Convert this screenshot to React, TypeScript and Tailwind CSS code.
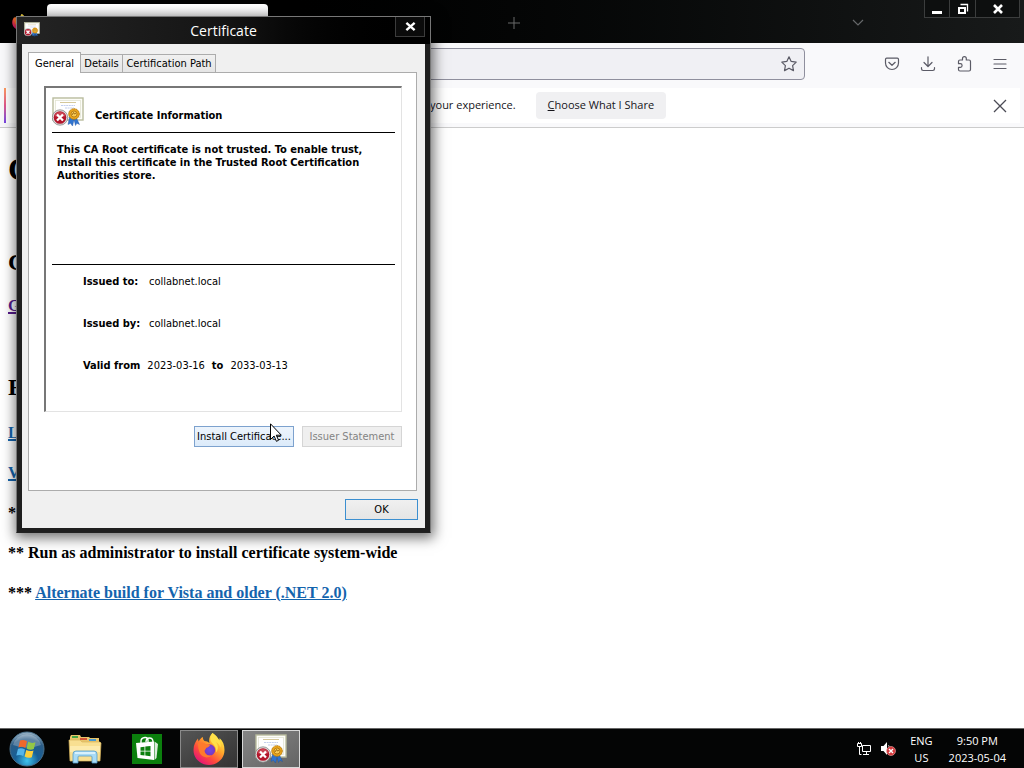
import type { ReactNode } from 'react';

function CertificateIcon({ className }: { className: string }) {
  return (
    <svg viewBox="0 0 32 30" className={className} aria-hidden="true">
      <rect x="1" y="1" width="30" height="22" fill="#fdfdf8" stroke="#b9bc9e" strokeWidth="1.4" />
      <rect x="3.5" y="3.5" width="25" height="17" fill="#fff" stroke="#e3e4d3" strokeWidth="0.8" />
      <path d="M8 5.5h16" stroke="#d5c89a" strokeWidth="1" />
      <path d="M9 8.5h14M13 11h9" stroke="#b4c3ea" strokeWidth="0.8" strokeDasharray="2 .6" />
      <path d="M17.5 20l-1.500 7.500 2.500-1.200L20.500 29l2-8zM24 20l3.500 7.500-2.600-1.200L23.500 28.500l-2-8z" fill="#2f74d0" stroke="#1c4f9f" strokeWidth="0.4" />
      <circle cx="22" cy="17" r="5.300" fill="#e9a51c" stroke="#b87908" strokeWidth="1" strokeDasharray="1.700 .5" />
      <circle cx="22" cy="17" r="3" fill="#f7ca55" stroke="#a96c07" strokeWidth="0.7" />
      <path d="M20 18l1.500-2.500 1 1.500 1.500-1" stroke="#8c5604" strokeWidth="0.8" fill="none" />
      <circle cx="8" cy="20.500" r="7.700" fill="#dedede" stroke="#7d7d7d" strokeWidth="0.7" />
      <circle cx="8" cy="20.500" r="6.300" fill="#b3162b" />
      <path d="M2.500 19a5.800 5.800 0 0 1 11 0q-5.500 2.500-11 0" fill="#d65a66" opacity=".7" />
      <path d="M5 17.500l6 6M11 17.500l-6 6" stroke="#fff" strokeWidth="2.300" />
    </svg>
  );
}

function FirefoxIcon({ className }: { className: string }) {
  return (
    <svg viewBox="0 0 32 32" className={className} aria-hidden="true">
      <defs>
        <linearGradient id="fx-body" x1="0.85" y1="0.1" x2="0.2" y2="0.95">
          <stop offset="0" stopColor="#fff04a" />
          <stop offset="0.35" stopColor="#ffa52a" />
          <stop offset="0.68" stopColor="#ff4b3c" />
          <stop offset="1" stopColor="#e3127a" />
        </linearGradient>
        <radialGradient id="fx-globe">
          <stop offset="0" stopColor="#6d4be8" />
          <stop offset="1" stopColor="#7b37bd" />
        </radialGradient>
      </defs>
      <path d="M19.500 0c4 2.500 5.500 5 6 8 1-.8 1.200-1.800 1-3C30 8 31.500 12 31.500 17c0 8.500-7 15-15.500 15S.5 25.500.5 17C.5 12 2.500 8.500 5 5.500c0 1 .2 2 .8 3 .8-2 2-3.500 4.200-4.500-.3 1.500.3 3 1.500 4 2 .2 3.500.8 5 2C15.500 6.500 16.500 3 19.500 0z" fill="url(#fx-body)" />
      <path d="M19.500 0c-3 4-2.500 7-.5 10 3 3 4.500 5 4.200 9.500 2.500-3.500 2-7.500-.2-10.500 2 1 3.700 3 4.500 5.500C29 9 24.500 3.500 19.500 0z" fill="#ffe04a" />
      <circle cx="16.500" cy="17" r="5.700" fill="url(#fx-globe)" />
      <path d="M5 10.500c3-1.500 6-1 7.500.5 2 .1 4 .2 4.500 1-.3 1.500-2 2.300-4 3 .2 1-1 1.500-1.500 3 .5 3 3.500 5.500 7 4.200-3 3.800-9.500 2.300-11.500-1.700C5.500 17 5 14 5 10.500z" fill="#ff7a2c" />
    </svg>
  );
}

function StartOrb() {
  return (
    <svg viewBox="0 0 36 36" className="size-9" aria-hidden="true">
      <defs>
        <radialGradient id="orb" cx="0.5" cy="0.85" r="0.85">
          <stop offset="0" stopColor="#3fc4ee" />
          <stop offset="0.4" stopColor="#175f96" />
          <stop offset="0.75" stopColor="#2b5c86" />
          <stop offset="1" stopColor="#a5bccb" />
        </radialGradient>
      </defs>
      <circle cx="18" cy="18" r="17" fill="url(#orb)" stroke="#49718d" strokeWidth="1" />
      <path d="M4 14a14.500 14.500 0 0 1 28 0q-14 5-28 0" fill="#fff" opacity=".25" />
      <path d="M11 9.500q3.500-1.500 7 .8l-1.600 6.700q-3.400-2-7-.6z" fill="#f0682b" />
      <path d="M19.200 10.800q3.500 2 7.300.4l-1.700 6.800q-3.600 1.500-7.200-.6z" fill="#93c746" />
      <path d="M9 17.700q3.500-1.400 7 .7l-1.700 6.700q-3.400-2-7-.6z" fill="#54b5ea" />
      <path d="M17.300 18.900q3.500 2 7.200.5l-1.700 6.800q-3.700 1.400-7.200-.7z" fill="#fbcf3b" />
    </svg>
  );
}

function ExplorerIcon() {
  return (
    <svg viewBox="0 0 34 30" className="h-[30px] w-[34px]" aria-hidden="true">
      <path d="M2 3l1-2h9l1 2h8l1 1h9v21H2z" fill="#e8c56c" />
      <path d="M4 2h6v2H4z" fill="#46a544" />
      <path d="M12 4h7v2h-7z" fill="#d35435" />
      <path d="M21 5h7v2h-7z" fill="#4a9bd0" />
      <path d="M1 6h11l2 2h18l1 1-1 18H2z" fill="#f8df91" stroke="#d8b45c" strokeWidth="0.7" />
      <path d="M2 12h30v6H2z" fill="#fff1bd" opacity=".65" />
      <path d="M5 29V20q0-3 3-3h18q3 0 3 3v9h-5v-6q0-1-1-1H11q-1 0-1 1v6z" fill="#a9dbf5" stroke="#579cc7" strokeWidth="0.8" />
      <path d="M7 19h20" stroke="#e9f8ff" strokeWidth="1.500" />
    </svg>
  );
}

function StoreIcon() {
  return (
    <svg viewBox="0 0 30 30" className="size-[30px]" aria-hidden="true">
      <path d="M0 0h30v30H0z" fill="#0b7f0d" />
      <path d="M4 9l18-1.500V26L5.500 24z" fill="#fff" />
      <path d="M22.500 7.500L26 10l-1.500 14-2 2z" fill="#dcebdc" />
      <path d="M9 10V7q0-3 4-3.500 3-.3 3 3V9M14 8q0-4 3.500-4T21 8" fill="none" stroke="#fff" strokeWidth="1.400" />
      <path d="M8.500 13.200l4-.5v4h-4zM13.300 12.600l5.200-.7v4.800h-5.200zM8.500 17.500h4v4l-4-.5zM13.300 17.500h5.200v4.800l-5.200-.7z" fill="#0b7f0d" />
    </svg>
  );
}

function ToolbarButton({ label, children }: { label: string; children: ReactNode }) {
  return (
    <button aria-label={label} className="flex size-5 items-center justify-center">
      <svg viewBox="0 0 16 16" className="size-4 overflow-visible" fill="none" stroke="#5b5b66" strokeWidth="1.200" strokeLinecap="round" strokeLinejoin="round">
        {children}
      </svg>
    </button>
  );
}

function WindowControls() {
  return (
    <div className="mr-1 flex h-[18px] border-x border-b border-[#3b3d3d] bg-[#0d0f0f]">
      <button aria-label="Minimize" className="flex w-[25px] items-center justify-center border-r border-[#3b3d3d]">
        <svg viewBox="0 0 12 12" className="size-3"><path d="M1 8h10v3H1z" fill="#fff" /></svg>
      </button>
      <button aria-label="Restore" className="flex w-[26px] items-center justify-center border-r border-[#3b3d3d]">
        <svg viewBox="0 0 12 12" className="size-3" fill="none" stroke="#fff"><path d="M2 5h6v5H2z" strokeWidth="2" /><path d="M3.500 1.500h7v7" strokeWidth="1.300" /></svg>
      </button>
      <button aria-label="Close" className="flex w-[43px] items-center justify-center">
        <svg viewBox="0 0 12 12" className="size-3" stroke="#fff" strokeWidth="2.600"><path d="M2 2l8 8M10 2l-8 8" /></svg>
      </button>
    </div>
  );
}

function Browser() {
  return (
    <div className="flex min-h-0 flex-1 flex-col bg-white">
      <header className="flex h-[43px] shrink-0 items-start bg-linear-to-r from-black via-[#040505] to-[#181a1a]">
        <FirefoxIcon className="mt-[14px] ml-3 size-4" />
        <div className="mt-1 ml-[19px] h-[39px] w-[221px] rounded-t-sm bg-linear-to-b from-white to-[#e6e6ea]" />
        <button aria-label="New tab" className="mt-[17px] ml-[240px]">
          <svg viewBox="0 0 12 12" className="size-3" stroke="#686a6a"><path d="M6 0v12M0 6h12" /></svg>
        </button>
        <button aria-label="List all tabs" className="mt-[17px] mr-[60px] ml-auto">
          <svg viewBox="0 0 12 12" className="size-3" fill="none" stroke="#66686a" strokeWidth="1.200"><path d="M1 3l5 5 5-5" /></svg>
        </button>
        <WindowControls />
      </header>
      <div className="flex h-[45px] shrink-0 items-center bg-[#f9f9fb] pr-[14px] pb-[3px] pl-40">
        <div className="flex h-8 flex-1 items-center rounded border border-[#8f8f9d] bg-[#f0f0f4] pr-[5px]">
          <input aria-label="Address" className="min-w-0 flex-1 bg-transparent outline-none" />
          <ToolbarButton label="Bookmark this page">
            <path d="M8 .8l2.200 4.600 5 .7-3.600 3.500.9 5L8 12.200l-4.500 2.400.9-5L.8 6.100l5-.7z" />
          </ToolbarButton>
        </div>
        <div className="ml-[77px] flex gap-4">
          <ToolbarButton label="Pocket">
            <path d="M2.700 2.200h10.600q1.200 0 1.200 1.200V7a6.500 6.500 0 0 1-13 0V3.400q0-1.200 1.200-1.200z" /><path d="M4.800 6.300L8 9.300l3.200-3" />
          </ToolbarButton>
          <ToolbarButton label="Downloads">
            <path d="M8 .8v9.500M4 6.500l4 4 4-4M1.500 11.500v1.300q0 1.700 1.700 1.700h9.600q1.700 0 1.700-1.700v-1.300" />
          </ToolbarButton>
          <ToolbarButton label="Extensions">
            <path d="M6.500 4V2.500a1.900 1.900 0 0 1 3.800 0V4h2.700q1.500 0 1.500 1.500v8q0 1.500-1.500 1.500H4q-1.500 0-1.500-1.500v-2.200h1.800a1.800 1.800 0 0 0 0-3.600H2.500V5.500Q2.500 4 4 4z" />
          </ToolbarButton>
          <ToolbarButton label="Menu">
            <path d="M2 3.500h12M2 8h12M2 12.500h12" />
          </ToolbarButton>
        </div>
      </div>
      <div className="h-10 shrink-0 border-b border-[#cccccc] bg-[#f9f9fb] px-1">
        <div className="flex h-[35px] items-center bg-white pr-[13px] text-[11px] text-[#15141a]">
          <span className="h-full w-0.5 bg-linear-to-b from-[#ff9a5c] via-[#e0568b] to-[#7542e5]" />
          <span className="ml-[424px] whitespace-nowrap">your experience.</span>
          <button className="ml-5 h-[27px] rounded bg-[#f0f0f2] px-3 whitespace-nowrap">
            <u>C</u>hoose What I Share
          </button>
          <button aria-label="Dismiss" className="ml-auto">
            <svg viewBox="0 0 14 14" className="size-[14px]" stroke="#4b4b55" strokeWidth="1.300"><path d="M1 1l12 12M13 1L1 13" /></svg>
          </button>
        </div>
      </div>
      <main className="flex min-h-0 flex-1 flex-col overflow-hidden px-2 pt-[21px] font-['Liberation_Serif',serif] text-[16px] leading-5 font-bold text-black">
        <h1 className="text-[32px] leading-10">C</h1>
        <h2 className="mt-[57px] text-[24px] leading-8">C</h2>
        <p className="mt-[18px]"><a href="#" className="text-[#551a8b] underline decoration-2">G</a></p>
        <h2 className="mt-[55px] text-[24px] leading-8">F</h2>
        <div className="mt-5 flex flex-col gap-5">
          <p><a href="#" className="text-[#1464ad] underline decoration-2">L</a></p>
          <p><a href="#" className="text-[#1464ad] underline decoration-2">V</a></p>
          <p>*</p>
          <p>** Run as administrator to install certificate system-wide</p>
          <p>*** <a href="#" className="text-[#1464ad] underline">Alternate build for Vista and older (.NET 2.0)</a></p>
        </div>
      </main>
    </div>
  );
}

function CertificateDialog() {
  return (
    <section
      role="dialog"
      aria-labelledby="dialog-title"
      className="absolute top-4 left-4 flex w-[415px] flex-col border border-[#777] border-b-[#222] bg-[#1f1f1f] px-[5px] pb-1 shadow-[1px_3px_12px_2px_rgba(0,0,0,0.55)]"
    >
      <header className="-mx-[5px] flex h-[27px] bg-linear-to-r from-[#242424] via-[#151515] to-black pr-[5px] pl-[7px] text-white">
        <CertificateIcon className="mt-[5px] h-[15px] w-4" />
        <h2 id="dialog-title" className="flex-1 pl-3 text-center text-[14px] leading-[27px]">Certificate</h2>
        <button aria-label="Close dialog" className="flex h-5 w-[30px] items-center justify-center border border-t-0 border-[#3c3c3c] bg-[#0b0b0b]">
          <svg viewBox="0 0 12 12" className="size-[11px]" stroke="#fff" strokeWidth="2.600"><path d="M1.500 2l9 8M10.500 2l-9 8" /></svg>
        </button>
      </header>
      <div className="bg-[#f0f0f0] pt-2 pr-2 pb-2 pl-1.5 font-['DejaVu_Sans_Condensed','DejaVu_Sans',sans-serif] text-[11px] leading-[13px] text-black">
        <div role="tablist" className="flex h-5 items-end">
          <button role="tab" aria-selected="true" className="relative -mb-px h-[21px] w-[53px] border border-b-0 border-[#acacac] bg-white">General</button>
          <button role="tab" aria-selected="false" className="h-[18px] w-[42px] border border-b-0 border-l-0 border-[#acacac] bg-linear-to-b from-[#f0f0f0] to-[#e5e5e5] whitespace-nowrap">Details</button>
          <button role="tab" aria-selected="false" className="h-[18px] w-[93px] border border-b-0 border-l-0 border-[#acacac] bg-linear-to-b from-[#f0f0f0] to-[#e5e5e5] whitespace-nowrap">Certification Path</button>
        </div>
        <div role="tabpanel" className="border border-[#acacac] bg-white pt-[13px] pr-[14px] pb-[43px] pl-[15px]">
          <div className="h-[326px] border-t-2 border-r border-b border-l-2 border-t-[#777] border-r-[#e3e3e3] border-b-[#e3e3e3] border-l-[#777] px-1.5">
            <div className="flex h-[45px] gap-[11px] border-b border-black pt-[9px]">
              <CertificateIcon className="h-[30px] w-8" />
              <h3 className="pt-3 font-bold">Certificate Information</h3>
            </div>
            <p className="h-[132px] border-b border-black px-[5px] pt-[10px] font-bold">
              This CA Root certificate is not trusted. To enable trust,<br />install this certificate in the Trusted Root Certification<br />Authorities store.
            </p>
            <dl className="mt-[10px] ml-[31px] flex flex-col gap-[29px]">
              <div className="flex"><dt className="w-[66px] font-bold">Issued to:</dt><dd>collabnet.local</dd></div>
              <div className="flex"><dt className="w-[66px] font-bold">Issued by:</dt><dd>collabnet.local</dd></div>
              <div className="flex gap-[7px]"><dt className="font-bold">Valid from</dt><dd>2023-03-16</dd><dt className="font-bold">to</dt><dd>2033-03-13</dd></div>
            </dl>
          </div>
          <div className="mt-[14px] flex justify-end gap-2">
            <button className="h-[21px] w-[100px] border border-[#7da2ce] bg-linear-to-b from-[#edf4fc] to-[#dcebfa] whitespace-nowrap">Install Certificate...</button>
            <button disabled className="h-[21px] w-[100px] border border-[#d5d5d5] bg-[#efefef] whitespace-nowrap text-[#838383]">Issuer Statement</button>
          </div>
        </div>
        <div className="-mr-px flex justify-end pt-2">
          <button className="h-[21px] w-[73px] border border-[#3c8fd0] bg-linear-to-b from-[#f0f0f0] to-[#e5e5e5]">OK</button>
        </div>
      </div>
    </section>
  );
}

function Taskbar() {
  return (
    <footer className="flex h-10 shrink-0 items-center border-t border-[#666] bg-[#040505] text-[11px] text-white">
      <button aria-label="Start" className="ml-[9px]"><StartOrb /></button>
      <button aria-label="File Explorer" className="ml-[23px]"><ExplorerIcon /></button>
      <button aria-label="Store" className="ml-[30px]"><StoreIcon /></button>
      <button aria-label="Firefox" className="ml-[18px] flex h-[38px] w-[58px] items-center justify-center border border-[#8a8a8a] bg-linear-to-br from-[#555] to-[#333]">
        <FirefoxIcon className="size-8" />
      </button>
      <button aria-label="Certificate" className="ml-1 flex h-[38px] w-[58px] items-center justify-center border border-[#d8d8d8] bg-linear-to-br from-[#858585] to-[#646464]">
        <CertificateIcon className="h-[30px] w-8" />
      </button>
      <div className="ml-auto flex items-center pr-[18px]">
        <svg viewBox="0 0 14 14" className="size-[14px]" fill="none" stroke="#fff" aria-label="Network">
          <path d="M5.500 3.500h8v6h-8zM9.500 9.500v3M6 12.500h6M.5 1.500h4v3h-4zM2.500 4.500v8h2M1.500 0v1.500M3.500 0v1.500" />
        </svg>
        <svg viewBox="0 0 15 15" className="ml-[10px] size-[15px]" aria-label="Volume muted">
          <path d="M0 5h2.500L6 1v13L2.500 10H0z" fill="#fff" /><path d="M7.500 4q2 3 0 6" stroke="#aaa" fill="none" />
          <circle cx="10" cy="10" r="4.500" fill="#d4383b" stroke="#f4aaaa" strokeWidth="0.6" />
          <path d="M8 8l4 4M12 8l-4 4" stroke="#fff" strokeWidth="1.400" />
        </svg>
        <div className="ml-[14px] text-center leading-[17px]">ENG<br />US</div>
        <div className="ml-4 text-center leading-[17px]">9:50 PM<br />2023-05-04</div>
      </div>
    </footer>
  );
}

export default function App() {
  return (
    <div className="relative flex h-screen flex-col overflow-hidden font-['Open_Sans','Noto_Sans',sans-serif]">
      <Browser />
      <CertificateDialog />
      <Taskbar />
      <svg viewBox="0 0 12 19" className="pointer-events-none absolute top-[423px] left-[270px] h-[19px] w-3" aria-hidden="true">
        <path d="M.5.8v15.700l3.600-3.500 2.300 5.300 2.200-1-2.300-5.100h5z" fill="#fff" stroke="#000" />
      </svg>
    </div>
  );
}
